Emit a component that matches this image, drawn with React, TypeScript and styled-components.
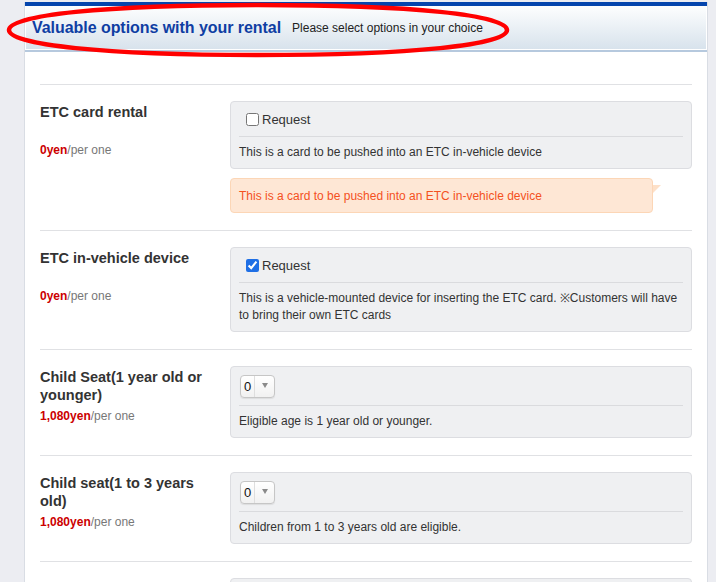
import React from 'react';
import styled, { createGlobalStyle } from 'styled-components';

const GlobalStyle = createGlobalStyle`
  body {
    margin: 0;
    background: #ecedf2;
    font-family: "Liberation Sans", Arial, sans-serif;
    color: #333;
  }
`;

const Page = styled.div`
  position: relative;
  padding: 2px 8px 0 24px;
`;

const Card = styled.div`
  width: 684px;
  box-sizing: border-box;
  background: #fff;
  border-left: 1px solid #d9dde4;
  border-right: 1px solid #d9dde4;
`;

const Header = styled.header`
  display: flex;
  align-items: center;
  gap: 11px;
  height: 44px;
  padding-left: 7px;
  border-top: 4px solid #0545ad;
  border-bottom: 2px solid #b6c9de;
  background: linear-gradient(#fdfefe, #d7e2ec);
  box-shadow: inset 0 -1px 0 #fff, inset 1px 0 0 #fff, inset -1px 0 0 #fff;
`;

const Title = styled.h2`
  margin: 0;
  font-size: 16px;
  font-weight: bold;
  letter-spacing: -0.05px;
  color: #0f3ea3;
`;

const Lead = styled.span`
  font-size: 12px;
  color: #222;
`;

const Body = styled.div`
  padding: 32px 15px 0;
`;

const Row = styled.section`
  display: grid;
  grid-template-columns: 175px 1fr;
  column-gap: 15px;
  padding: 16px 0 17px;
  border-top: 1px solid #e0e1e4;
`;

const Name = styled.h4`
  margin: 0;
  padding-top: 2px;
  min-height: 35px;
  font-size: 14.5px;
  line-height: 18px;
  font-weight: bold;
  color: #333;
`;

const Price = styled.div`
  margin-top: 3px;
  font-size: 12px;
  line-height: 18px;
  color: #777;
`;

const Yen = styled.b`
  color: #cc0000;
`;

const OptionBox = styled.div`
  background: #eff0f2;
  border: 1px solid #dcdde1;
  border-radius: 4px;
  padding: 7px 8px 8px;
`;

const Control = styled.div`
  display: flex;
  align-items: center;
  min-height: 20px;
`;

const Check = styled.label`
  display: flex;
  align-items: center;
  gap: 3px;
  margin-left: 7px;
  font-size: 13px;
  color: #333;

  input {
    margin: 0;
    width: 13px;
    height: 13px;
    accent-color: #1f6fe5;
  }
`;

const Select = styled.span`
  display: inline-flex;
  align-items: stretch;
  margin: 1px 0 0 1px;
  height: 23px;
  box-sizing: border-box;
  border: 1px solid #c6c6c6;
  border-radius: 4px;
  background: linear-gradient(#fff, #f1f1f1);
  box-shadow: 0 1px 1px rgba(0, 0, 0, 0.08);
  font-size: 13px;
  color: #111;
`;

const SelectValue = styled.span`
  display: flex;
  align-items: center;
  padding: 0 3px;
  border-right: 1px solid #dedede;
`;

const SelectArrow = styled.span`
  display: flex;
  align-items: center;
  justify-content: center;
  width: 19px;

  &::before {
    content: '';
    border-left: 3.5px solid transparent;
    border-right: 3.5px solid transparent;
    border-top: 5px solid #8a8a8a;
    margin-top: -3px;
  }
`;

const Rule = styled.hr`
  margin: 7px 0 0;
  border: 0;
  border-top: 1px solid #dadbde;
`;

const Desc = styled.p<{ $lines?: number }>`
  margin: 7px 0 0;
  font-size: 12px;
  line-height: ${(p) => (p.$lines && p.$lines > 1 ? '16.5px' : '16px')};
  color: #333;
`;

const Notice = styled.div`
  position: relative;
  margin: 9px 39px 0 0;
  padding: 9px 8px 8px;
  background: #fee7d5;
  border: 1px solid #fcd6b6;
  border-radius: 4px;
  font-size: 12px;
  line-height: 16px;
  color: #f4511e;

  &::after {
    content: '';
    position: absolute;
    right: -9px;
    top: 6px;
    border-top: 8px solid #fde0c8;
    border-right: 8px solid transparent;
  }
`;

const Mark = styled.svg`
  position: absolute;
  left: 0;
  top: 0;
  pointer-events: none;
`;

type Option = {
  name: string;
  price: string;
  kind: 'check' | 'select';
  checked?: boolean;
  desc: string;
  lines?: number;
  notice?: string;
};

const options: Option[] = [
  {
    name: 'ETC card rental',
    price: '0yen',
    kind: 'check',
    desc: 'This is a card to be pushed into an ETC in-vehicle device',
    notice: 'This is a card to be pushed into an ETC in-vehicle device'
  },
  {
    name: 'ETC in-vehicle device',
    price: '0yen',
    kind: 'check',
    checked: true,
    lines: 2,
    desc: 'This is a vehicle-mounted device for inserting the ETC card. ※Customers will have to bring their own ETC cards'
  },
  {
    name: 'Child Seat(1 year old or younger)',
    price: '1,080yen',
    kind: 'select',
    desc: 'Eligible age is 1 year old or younger.'
  },
  {
    name: 'Child seat(1 to 3 years old)',
    price: '1,080yen',
    kind: 'select',
    desc: 'Children from 1 to 3 years old are eligible.'
  },
  {
    name: 'Junior seat(4 to 6 years old)',
    price: '1,080yen',
    kind: 'select',
    desc: 'Children from 4 to 6 years old are eligible.'
  }
];

const OptionRow = ({ option }: { option: Option }) => (
  <Row>
    <div>
      <Name>{option.name}</Name>
      <Price><Yen>{option.price}</Yen>/per one</Price>
    </div>
    <div>
      <OptionBox>
        <Control>
          {option.kind === 'check' ? (
            <Check>
              <input type="checkbox" defaultChecked={option.checked} />
              Request
            </Check>
          ) : (
            <Select>
              <SelectValue>0</SelectValue>
              <SelectArrow />
            </Select>
          )}
        </Control>
        <Rule />
        <Desc $lines={option.lines}>{option.desc}</Desc>
      </OptionBox>
      {option.notice && <Notice>{option.notice}</Notice>}
    </div>
  </Row>
);

const App = () => (
  <Page>
    <GlobalStyle />
    <Card>
      <Header>
        <Title>Valuable options with your rental</Title>
        <Lead>Please select options in your choice</Lead>
      </Header>
      <Body>
        {options.map((option, index) => (
          <OptionRow key={`option-${index}`} option={option} />
        ))}
      </Body>
    </Card>
    <Mark width="520" height="64" viewBox="0 0 520 64">
      <path
        d="M 9 30 C 9 15 104 5 258 5 C 412 5 507 15 507 30 C 507 45 412 55 258 55 C 104 55 9 45 9 30 Z"
        fill="none"
        stroke="#ff0000"
        strokeWidth="4.5"
      />
    </Mark>
  </Page>
);

export default App;
